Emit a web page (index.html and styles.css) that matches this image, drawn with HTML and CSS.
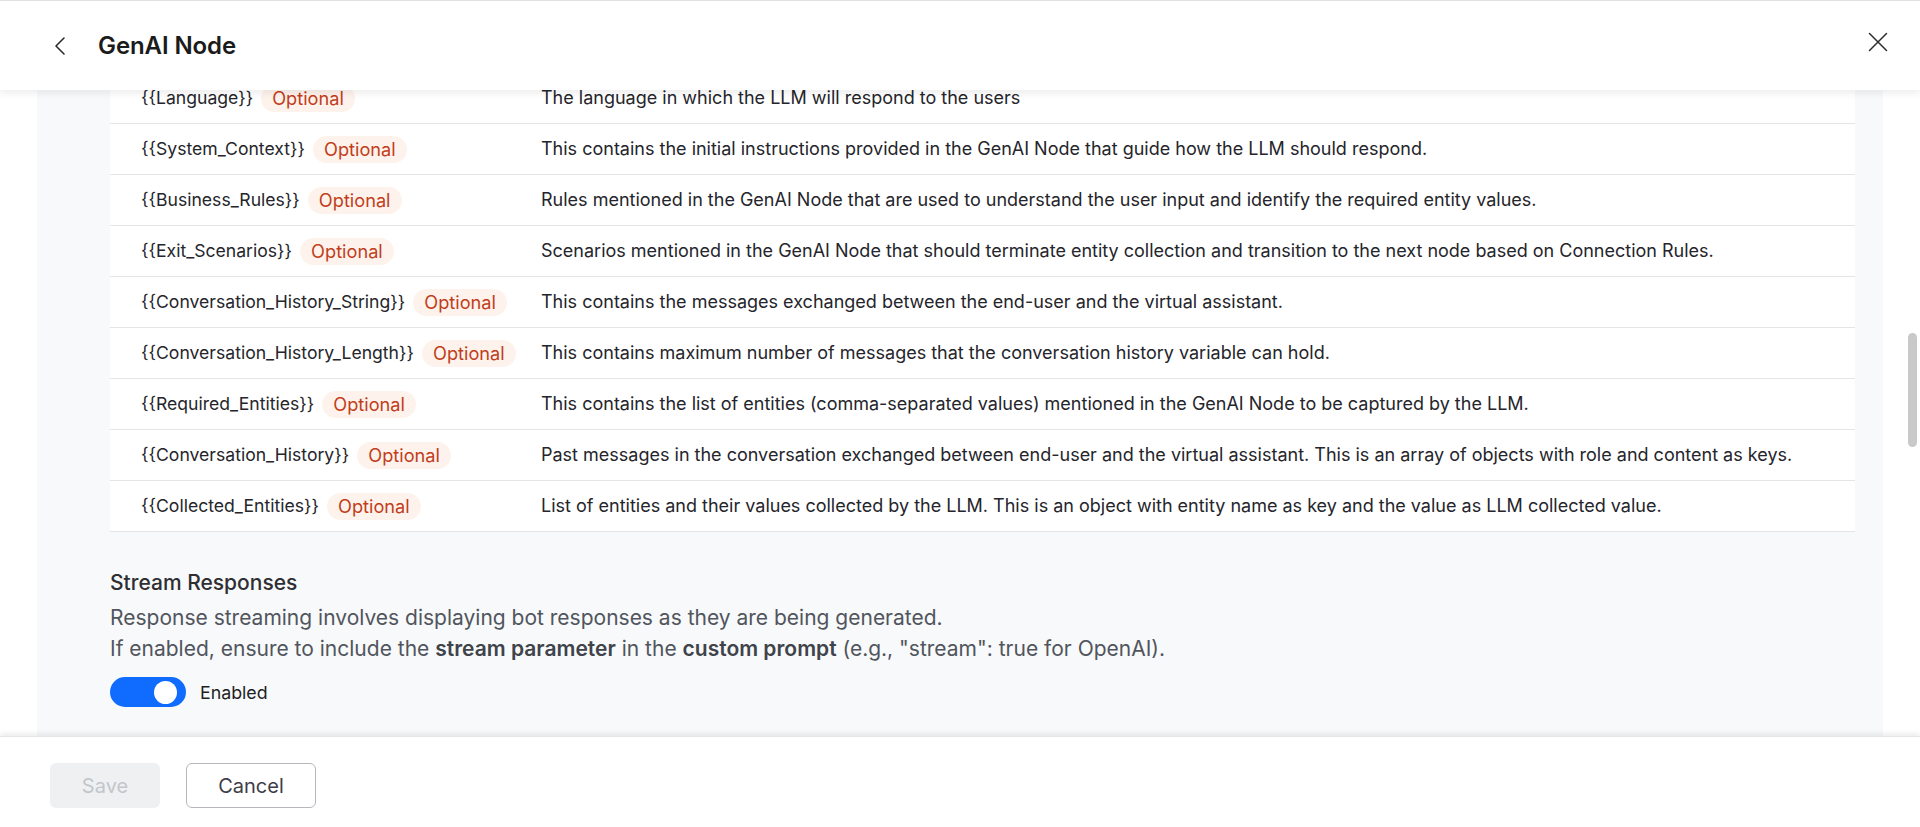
FILE: index.html
```html
<!DOCTYPE html>
<html lang="en">
<head>
<meta charset="utf-8">
<title>GenAI Node</title>
<link rel="stylesheet" href="styles.css">
</head>
<body>
<div class="page">
  <header class="topbar">
    <button class="icon-btn back" aria-label="Back">
      <svg width="12" height="20" viewBox="0 0 12 20"><path d="M10 2 L2 10 L10 18" fill="none" stroke="#2b2b2b" stroke-width="1.6" stroke-linecap="round" stroke-linejoin="round"/></svg>
    </button>
    <h1 class="title">GenAI Node</h1>
    <button class="icon-btn close" aria-label="Close">
      <svg width="20" height="20" viewBox="0 0 20 20"><path d="M1.5 1.5 L18.5 18.5 M18.5 1.5 L1.5 18.5" fill="none" stroke="#2b2b2b" stroke-width="1.5" stroke-linecap="round"/></svg>
    </button>
  </header>

  <main class="main">
    <div class="panel">
      <div class="panel-inner">
        <div class="vars">
          <div class="row"><div class="name">{{Language}}<span class="pill">Optional</span></div><div class="desc">The language in which the LLM will respond to the users</div></div>
          <div class="row"><div class="name">{{System_Context}}<span class="pill">Optional</span></div><div class="desc">This contains the initial instructions provided in the GenAI Node that guide how the LLM should respond.</div></div>
          <div class="row"><div class="name">{{Business_Rules}}<span class="pill">Optional</span></div><div class="desc">Rules mentioned in the GenAI Node that are used to understand the user input and identify the required entity values.</div></div>
          <div class="row"><div class="name">{{Exit_Scenarios}}<span class="pill">Optional</span></div><div class="desc">Scenarios mentioned in the GenAI Node that should terminate entity collection and transition to the next node based on Connection Rules.</div></div>
          <div class="row"><div class="name">{{Conversation_History_String}}<span class="pill">Optional</span></div><div class="desc">This contains the messages exchanged between the end-user and the virtual assistant.</div></div>
          <div class="row"><div class="name">{{Conversation_History_Length}}<span class="pill">Optional</span></div><div class="desc">This contains maximum number of messages that the conversation history variable can hold.</div></div>
          <div class="row"><div class="name">{{Required_Entities}}<span class="pill">Optional</span></div><div class="desc">This contains the list of entities (comma-separated values) mentioned in the GenAI Node to be captured by the LLM.</div></div>
          <div class="row"><div class="name">{{Conversation_History}}<span class="pill">Optional</span></div><div class="desc">Past messages in the conversation exchanged between end-user and the virtual assistant. This is an array of objects with role and content as keys.</div></div>
          <div class="row"><div class="name">{{Collected_Entities}}<span class="pill">Optional</span></div><div class="desc">List of entities and their values collected by the LLM. This is an object with entity name as key and the value as LLM collected value.</div></div>
        </div>

        <section class="stream">
          <h2 class="stream-title">Stream Responses</h2>
          <p class="stream-text">Response streaming involves displaying bot responses as they are being generated.<br>If enabled, ensure to include the <b>stream parameter</b> in the <b>custom prompt</b> (e.g., "stream": true for OpenAI).</p>
          <div class="toggle-line">
            <span class="toggle"><span class="knob"></span></span>
            <span class="toggle-label">Enabled</span>
          </div>
        </section>
      </div>
    </div>
    <div class="scroll-gutter"></div>
    <div class="scroll-thumb"></div>
  </main>

  <footer class="footer">
    <button class="btn btn-save" disabled>Save</button>
    <button class="btn btn-cancel">Cancel</button>
  </footer>
</div>
</body>
</html>
```
FILE: styles.css
```css
* { box-sizing: border-box; }
html, body { margin: 0; padding: 0; height: 100%; }
body {
  font-family: Inter, "Noto Sans", "Liberation Sans", sans-serif;
  color: #2a2a2a;
  background: #ffffff;
  overflow: hidden;
}
.page {
  position: relative;
  display: flex;
  flex-direction: column;
  height: 827px;
}
/* sticky header floating over the scrolled content */
.topbar {
  position: absolute;
  top: 0;
  left: 0;
  right: 0;
  z-index: 3;
  height: 90px;
  display: flex;
  align-items: center;
  background: #fff;
  border-top: 1px solid #e2e2e2;
  box-shadow: 0 3px 8px rgba(0,0,0,0.08);
  padding: 0 30px 0 50px;
}
.icon-btn {
  border: 0;
  background: transparent;
  padding: 0;
  display: flex;
  align-items: center;
  justify-content: center;
  cursor: pointer;
}
.back { width: 20px; height: 24px; margin-right: 28px; }
.title {
  margin: 0;
  font-size: 24px;
  font-weight: 600;
  color: #1b1b1b;
  letter-spacing: -0.1px;
  flex: 1;
}
.close { width: 24px; height: 24px; margin-top: -8px; }

.main {
  flex: 1;
  position: relative;
  overflow: hidden;
  display: flex;
  background: #fff;
}
.panel {
  margin-left: 37px;
  width: 1846px;
  background: #f8f9fa;
}
.panel-inner {
  padding: 73px 28px 0 73px;
}
.vars { background: #fff; }
.row {
  display: flex;
  align-items: center;
  height: 51px;
  border-bottom: 1px solid #e3e5e8;
  color: #25252b;
}
.name {
  width: 431px;
  padding-left: 31px;
  display: flex;
  align-items: center;
  flex: none;
  font-size: 17.6px;
  line-height: 16px;
}
.pill {
  margin-left: 8px;
  padding: 5.5px 11px;
  line-height: 16px;
  border-radius: 14px;
  background: #fdf3ec;
  color: #c23d1a;
  font-size: 18.2px;
}
.desc { flex: 1; font-size: 18px; line-height: 16px; }

.stream { padding: 37px 0 0 0; }
.stream-title {
  margin: 0;
  font-size: 21px;
  font-weight: 500;
  color: #2e2e33;
  line-height: 28px;
}
.stream-text {
  margin: 5px 0 0 0;
  font-size: 21px;
  line-height: 31px;
  color: #51555d;
}
.stream-text b { font-weight: 600; color: #3f434a; }
.toggle-line {
  display: flex;
  align-items: center;
  margin-top: 13px;
}
.toggle {
  width: 76px;
  height: 30px;
  border-radius: 15px;
  background: #0f6cff;
  display: flex;
  align-items: center;
  justify-content: flex-end;
  padding-right: 9px;
}
.knob {
  width: 23px;
  height: 23px;
  border-radius: 50%;
  background: #fff;
}
.toggle-label {
  margin-left: 14px;
  font-size: 17.8px;
  color: #1f1f24;
}

.scroll-gutter { flex: 1; }
.scroll-thumb {
  position: absolute;
  left: 1908px;
  top: 333px;
  width: 9px;
  height: 114px;
  border-radius: 5px;
  background: #c9c9c9;
}

.footer {
  position: relative;
  z-index: 2;
  height: 91px;
  flex: none;
  display: flex;
  align-items: flex-start;
  gap: 26px;
  padding: 26px 0 0 50px;
  background: #fff;
  box-shadow: 0 -2px 6px rgba(0,0,0,0.09);
  border-top: 1px solid #e6e6e6;
}
.btn {
  height: 45px;
  border-radius: 6px;
  font-family: Inter, "Noto Sans", "Liberation Sans", sans-serif;
  font-size: 20px;
  padding: 0;
}
.btn-save {
  width: 110px;
  background: #eef0f2;
  color: #c2c6cc;
  border: 0;
}
.btn-cancel {
  width: 130px;
  background: #fff;
  color: #3d3d48;
  border: 1px solid #b6b7bd;
}
```
